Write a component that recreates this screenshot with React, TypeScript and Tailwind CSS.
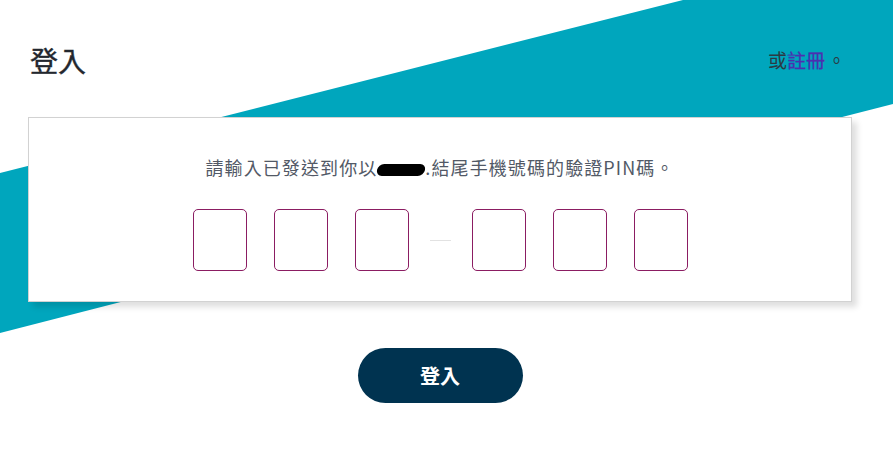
const font = { fontFamily: '"Noto Sans CJK TC", "Noto Sans", sans-serif' };

function PinBox() {
  return <div className="h-[62px] w-[54px] rounded-[5px] border border-[#8b1d62] bg-white" />;
}

export default function App() {
  return (
    <div className="relative h-[453px] w-full overflow-hidden bg-white" style={font}>
      {/* diagonal band behind the card */}
      <svg
        className="absolute inset-0"
        width="893"
        height="453"
        viewBox="0 0 893 453"
        preserveAspectRatio="none"
      >
        <polygon points="683,0 893,0 893,104 0,333 0,173" fill="#00a6bd" />
      </svg>

      <div className="relative">
        <div className="mt-[40px] flex h-[40px] items-center justify-between pl-[30px] pr-[47px]">
          <h1 className="text-[28px] leading-[40px] text-[#23272e] [-webkit-text-stroke:0.4px_#23272e]">登入</h1>
          <div className="text-[19px] leading-[24px] text-[#2b3a44]">
            或<a className="text-[#4b2fb0] [-webkit-text-stroke:0.3px_#4b2fb0]">註冊</a>
            <span className="ml-[2px]">。</span>
          </div>
        </div>

        <div className="mx-[28px] mt-[37px] h-[185px] w-[824px] border border-[#d2d2d2] bg-white shadow-[5px_5px_6px_rgba(0,0,0,0.13)]">
          <p className="mt-[37px] text-center text-[18px] leading-[24px] tracking-[1.1px] text-[#525966]">
            請輸入已發送到你以
            <span className="inline-block h-[12px] w-[48px] -skew-x-12 rounded-full bg-black align-[-1px]" />
            .結尾手機號碼的驗證PIN碼。
          </p>
          <div className="mt-[30px] flex items-center justify-center">
            <div className="flex gap-[27px]">
              <PinBox />
              <PinBox />
              <PinBox />
            </div>
            <div className="mx-[21px] h-px w-[21px] bg-[#e2e2e2]" />
            <div className="flex gap-[27px]">
              <PinBox />
              <PinBox />
              <PinBox />
            </div>
          </div>
        </div>

        <div className="mx-[28px] mt-[46px] flex w-[824px] justify-center">
          <button className="h-[55px] w-[165px] rounded-full bg-[#003350] text-[20px] font-bold text-white">
            登入
          </button>
        </div>
      </div>
    </div>
  );
}
